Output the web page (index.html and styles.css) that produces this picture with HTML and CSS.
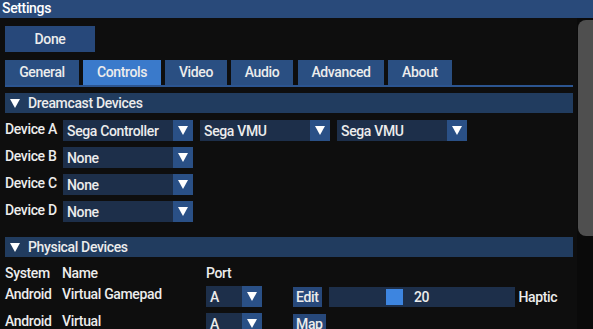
FILE: index.html
```html
<!DOCTYPE html>
<html lang="en">
<head>
    <meta charset="UTF-8">
    <title>Settings</title>
    <link rel="stylesheet" href="styles.css">
</head>
<body>
    <div class="titlebar">Settings</div>
    <div class="window">
        <div class="content">
            <button class="btn done">Done</button>

            <div class="tabs">
                <div class="tab w-general">General</div>
                <div class="tab active w-controls">Controls</div>
                <div class="tab w-video">Video</div>
                <div class="tab w-audio">Audio</div>
                <div class="tab w-advanced">Advanced</div>
                <div class="tab w-about">About</div>
            </div>

            <div class="header">
                <svg class="arrow" width="10" height="9" viewBox="0 0 10 9"><polygon points="0,0 10,0 5,9" fill="#fff"/></svg>
                Dreamcast Devices
            </div>

            <div class="devices">
                <div class="device-row">
                    <span class="label">Device A</span>
                    <div class="combo"><span>Sega Controller</span><i class="drop"><svg width="10" height="9" viewBox="0 0 10 9"><polygon points="0,0 10,0 5,9" fill="#fff"/></svg></i></div>
                    <div class="combo"><span>Sega VMU</span><i class="drop"><svg width="10" height="9" viewBox="0 0 10 9"><polygon points="0,0 10,0 5,9" fill="#fff"/></svg></i></div>
                    <div class="combo"><span>Sega VMU</span><i class="drop"><svg width="10" height="9" viewBox="0 0 10 9"><polygon points="0,0 10,0 5,9" fill="#fff"/></svg></i></div>
                </div>
                <div class="device-row">
                    <span class="label">Device B</span>
                    <div class="combo"><span>None</span><i class="drop"><svg width="10" height="9" viewBox="0 0 10 9"><polygon points="0,0 10,0 5,9" fill="#fff"/></svg></i></div>
                </div>
                <div class="device-row">
                    <span class="label">Device C</span>
                    <div class="combo"><span>None</span><i class="drop"><svg width="10" height="9" viewBox="0 0 10 9"><polygon points="0,0 10,0 5,9" fill="#fff"/></svg></i></div>
                </div>
                <div class="device-row">
                    <span class="label">Device D</span>
                    <div class="combo"><span>None</span><i class="drop"><svg width="10" height="9" viewBox="0 0 10 9"><polygon points="0,0 10,0 5,9" fill="#fff"/></svg></i></div>
                </div>
            </div>

            <div class="header physical">
                <svg class="arrow" width="10" height="9" viewBox="0 0 10 9"><polygon points="0,0 10,0 5,9" fill="#fff"/></svg>
                Physical Devices
            </div>

            <div class="table">
                <div class="trow head">
                    <span class="c-sys">System</span>
                    <span class="c-name">Name</span>
                    <span class="c-port">Port</span>
                </div>
                <div class="trow">
                    <span class="c-sys">Android</span>
                    <span class="c-name">Virtual Gamepad</span>
                    <div class="c-port"><div class="combo port"><span>A</span><i class="drop"><svg width="10" height="9" viewBox="0 0 10 9"><polygon points="0,0 10,0 5,9" fill="#fff"/></svg></i></div></div>
                    <button class="btn small">Edit</button>
                    <div class="slider">
                        <div class="grab" style="left: 57px"></div>
                        <span>20</span>
                    </div>
                    <span class="haptic">Haptic</span>
                </div>
                <div class="trow">
                    <span class="c-sys">Android</span>
                    <span class="c-name">Virtual</span>
                    <div class="c-port"><div class="combo port"><span>A</span><i class="drop"><svg width="10" height="9" viewBox="0 0 10 9"><polygon points="0,0 10,0 5,9" fill="#fff"/></svg></i></div></div>
                    <button class="btn small">Map</button>
                </div>
            </div>
        </div>
        <div class="scrollbar">
            <div class="scroll-grab"></div>
        </div>
    </div>
</body>
</html>
```

FILE: styles.css
```css
/* ImGui-like dark settings window */
html, body {
    margin: 0;
    height: 100%;
    overflow: hidden;
}

body {
    background-color: #0e0e0e;
    color: #ececec;
    font-family: Roboto, "Liberation Sans", sans-serif;
    font-size: 14px;
    font-weight: 500;
    letter-spacing: -0.35px;
}

.titlebar {
    height: 18px;
    line-height: 17px;
    padding-left: 2px;
    background-color: #294a7a;
    color: #fff;
}

.window {
    display: flex;
    height: calc(100% - 18px);
}

.content {
    flex: 1;
    padding: 8px 5px 0 5px;
    overflow: hidden;
}

.btn {
    font: inherit;
    letter-spacing: inherit;
    color: #ececec;
    background-color: #27487a;
    border: none;
    padding: 0;
    cursor: pointer;
}

.done {
    width: 90px;
    height: 26px;
    display: block;
}

/* tabs */
.tabs {
    display: flex;
    gap: 4px;
    margin-top: 8px;
    border-bottom: 2px solid #2c5590;
    width: 568px;
}

.tab {
    height: 25px;
    line-height: 25px;
    text-align: center;
    background-color: #2a4f82;
}

.tab.active {
    background-color: #3a7acb;
}

.w-general { width: 74px; }
.w-controls { width: 78px; }
.w-video { width: 62px; }
.w-audio { width: 62px; }
.w-advanced { width: 86px; margin-left: 1px; }
.w-about { width: 64px; }

/* collapsing headers */
.header {
    width: 568px;
    height: 20px;
    margin-top: 6px;
    display: flex;
    align-items: center;
    gap: 8px;
    padding-left: 5px;
    box-sizing: border-box;
    background-color: #213c5f;
}

.header.physical {
    margin-top: 15px;
}

.arrow {
    display: block;
}

/* device rows */
.devices {
    display: flex;
    flex-direction: column;
    gap: 6px;
    margin-top: 7px;
}

.device-row {
    display: flex;
    align-items: center;
    gap: 7px;
    height: 21px;
}

.device-row .label {
    width: 51px;
    white-space: nowrap;
    margin-bottom: 3px;
}

.combo {
    width: 130px;
    height: 21px;
    display: flex;
    align-items: center;
    justify-content: space-between;
    background-color: #1d2f4a;
    box-sizing: border-box;
}

.combo span {
    padding-left: 4px;
}

.drop {
    width: 20px;
    height: 100%;
    display: flex;
    align-items: center;
    justify-content: center;
    background-color: #2a5086;
}

/* physical devices table */
.table {
    margin-top: 7px;
}

.trow {
    display: flex;
    align-items: center;
    height: 21px;
    margin-bottom: 6px;
}

.trow.head {
    height: 17px;
    margin-bottom: 5px;
}

.trow .c-sys,
.trow .c-name {
    margin-bottom: 5px;
}

.trow.head .c-sys,
.trow.head .c-name {
    margin-bottom: 0;
}

.c-sys { width: 57px; }
.c-name { width: 144px; }
.c-port { width: 87px; }

.combo.port {
    width: 56px;
}

.btn.small {
    height: 20px;
    padding: 0 3px;
    margin-right: 7px;
}

.slider {
    position: relative;
    width: 186px;
    height: 20px;
    background-color: #1d2f4a;
    display: flex;
    align-items: center;
    justify-content: center;
}

.slider .grab {
    position: absolute;
    top: 2px;
    width: 17px;
    height: 16px;
    background-color: #3d85e0;
}

.slider span {
    position: relative;
}

.haptic {
    margin-left: 4px;
}

/* scrollbar */
.scrollbar {
    width: 16px;
    background-color: #0a0a0a;
    padding-top: 2px;
}

.scroll-grab {
    height: 216px;
    margin-left: 1px;
    border-radius: 8px 0 0 8px;
    background-color: #4f4f4f;
}
```
